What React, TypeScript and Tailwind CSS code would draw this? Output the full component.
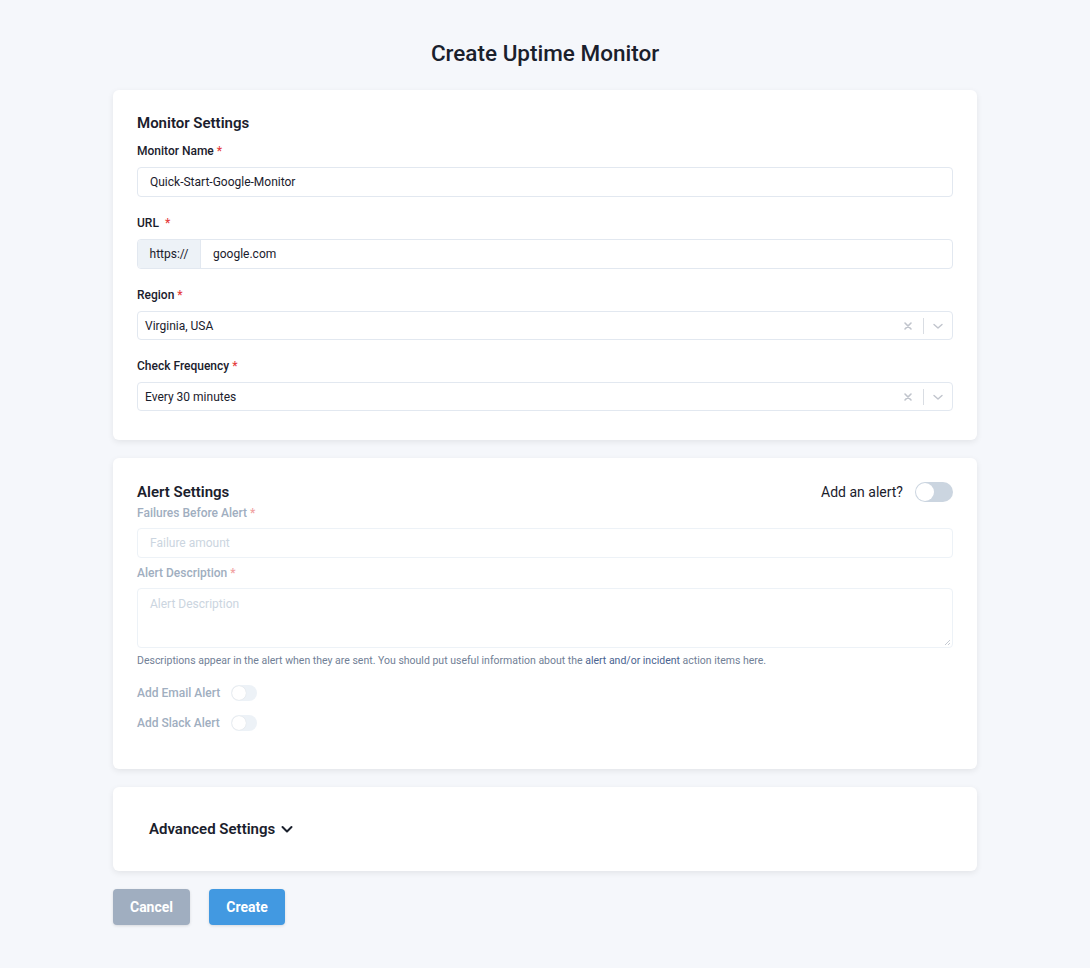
import React from "react";

function Label({ children, disabled }: { children: React.ReactNode; disabled?: boolean }) {
  return (
    <div className={`text-[12px] leading-[18px] font-medium ${disabled ? "text-[#a0aec0]" : "text-[#1a202c]"}`}>
      {children}
      <span className={disabled ? "text-[#f1a3a3] ml-[3px]" : "text-[#e53e3e] ml-[3px]"}>*</span>
    </div>
  );
}

function SelectBox({ value }: { value: string }) {
  return (
    <div className="mt-[7px] h-[29px] border border-[#e2e8f0] rounded-[4px] bg-white flex items-center">
      <div className="flex-1 pl-[7px] text-[12px] text-[#1a202c]">{value}</div>
      <div className="flex items-center h-full pr-[7px]">
        <svg width="14" height="14" viewBox="0 0 14 14" className="mx-[1px]">
          <path d="M4 4L10 10M10 4L4 10" stroke="#c0c4cc" strokeWidth="1.6" strokeLinecap="round" />
        </svg>
        <div className="w-px h-[16px] bg-[#d9dde3] mx-[7px]" />
        <svg width="14" height="14" viewBox="0 0 14 14">
          <path d="M3 5.5L7 9L11 5.5" stroke="#c0c4cc" strokeWidth="1.4" fill="none" strokeLinecap="round" strokeLinejoin="round" />
        </svg>
      </div>
    </div>
  );
}

function SmallToggle() {
  return (
    <div className="w-[26px] h-[16px] rounded-full bg-[#edf2f7] relative">
      <div className="absolute left-[1px] top-[1px] w-[14px] h-[14px] rounded-full bg-white shadow-[0_0_1px_rgba(0,0,0,0.15)]" />
    </div>
  );
}

export default function App() {
  return (
    <div
      className="min-h-screen bg-[#f5f7fb] pb-[43px]"
      style={{ fontFamily: "Roboto, 'Liberation Sans', sans-serif" }}
    >
      <h1 className="pt-[38px] text-center text-[22.5px] leading-[30px] font-medium text-[#1a202c]">
        Create Uptime Monitor
      </h1>

      <div className="w-[864px] mx-auto mt-[22px]">
        {/* Monitor Settings */}
        <div className="bg-white rounded-[6px] shadow-[0_2px_6px_rgba(0,0,0,0.08)] px-[24px] pt-[23px] pb-[29px]">
          <div className="text-[15px] leading-[20px] font-semibold text-[#1a202c]">Monitor Settings</div>

          <div className="mt-[9px]">
            <Label>Monitor Name</Label>
            <div className="mt-[7px] h-[30px] border border-[#e2e8f0] rounded-[4px] flex items-center px-[12px] text-[12px] text-[#1a202c]">
              Quick-Start-Google-Monitor
            </div>
          </div>

          <div className="mt-[17px]">
            <div className="text-[12px] leading-[18px] font-medium text-[#1a202c]">
              URL <span className="text-[#e53e3e] ml-[3px]">*</span>
            </div>
            <div className="mt-[7px] h-[30px] border border-[#e2e8f0] rounded-[4px] flex items-stretch overflow-hidden">
              <div className="w-[63px] bg-[#edf2f7] flex items-center justify-center text-[12px] text-[#1a202c] border-r border-[#e2e8f0]">
                https://
              </div>
              <div className="flex-1 flex items-center pl-[12px] text-[12px] text-[#1a202c]">google.com</div>
            </div>
          </div>

          <div className="mt-[17px]">
            <Label>Region</Label>
            <SelectBox value="Virginia, USA" />
          </div>

          <div className="mt-[17px]">
            <Label>Check Frequency</Label>
            <SelectBox value="Every 30 minutes" />
          </div>
        </div>

        {/* Alert Settings */}
        <div className="mt-[18px] bg-white rounded-[6px] shadow-[0_2px_6px_rgba(0,0,0,0.08)] px-[24px] pt-[24px] pb-[36px]">
          <div className="flex items-center justify-between h-[20px]">
            <div className="text-[15px] leading-[20px] font-semibold text-[#1a202c]">Alert Settings</div>
            <div className="flex items-center">
              <span className="text-[14px] text-[#1a202c] mr-[12px]">Add an alert?</span>
              <div className="w-[38px] h-[20px] rounded-full bg-[#cbd5e0] relative">
                <div className="absolute left-[1px] top-[1px] w-[18px] h-[18px] rounded-full bg-white" />
              </div>
            </div>
          </div>

          <div className="mt-[2px]">
            <Label disabled>Failures Before Alert</Label>
            <div className="mt-[6px] h-[30px] border border-[#edf2f7] rounded-[4px] flex items-center px-[12px] text-[12px] text-[#cbd5e0]">
              Failure amount
            </div>
          </div>

          <div className="mt-[6px]">
            <Label disabled>Alert Description</Label>
            <div className="mt-[6px] h-[60px] border border-[#edf2f7] rounded-[4px] px-[12px] pt-[6px] text-[12px] text-[#cbd5e0] relative">
              Alert Description
              <svg width="8" height="8" viewBox="0 0 8 8" className="absolute right-[1px] bottom-[1px]">
                <path d="M7 2L2 7M7 5L5 7" stroke="#b8bec8" strokeWidth="0.8" />
              </svg>
            </div>
          </div>

          <div className="mt-[5px] text-[10.5px] leading-[15px] text-[#718096]">
            Descriptions appear in the alert when they are sent. You should put useful information about the{" "}
            <span className="text-[#4a6390]">alert and/or incident</span> action items here.
          </div>

          <div className="mt-[15px] flex items-center h-[20px]">
            <span className="text-[12px] text-[#a0aec0] font-medium mr-[11px]">Add Email Alert</span>
            <SmallToggle />
          </div>
          <div className="mt-[10px] flex items-center h-[20px]">
            <span className="text-[12px] text-[#a0aec0] font-medium mr-[11px]">Add Slack Alert</span>
            <SmallToggle />
          </div>
        </div>

        {/* Advanced Settings */}
        <div className="mt-[18px] bg-white rounded-[6px] shadow-[0_2px_6px_rgba(0,0,0,0.08)] h-[84px] flex items-center pl-[36px]">
          <span className="text-[15px] font-semibold text-[#1a202c]">Advanced Settings</span>
          <svg width="14" height="14" viewBox="0 0 14 14" className="ml-[5px]">
            <path d="M2.5 5L7 9.5L11.5 5" stroke="#1a202c" strokeWidth="2" fill="none" strokeLinecap="round" strokeLinejoin="round" />
          </svg>
        </div>

        <div className="mt-[18px] flex gap-[19px]">
          <button className="w-[77px] h-[36px] rounded-[4px] bg-[#a0aec0] text-white text-[14px] font-bold shadow-[0_1px_3px_rgba(0,0,0,0.12)]">
            Cancel
          </button>
          <button className="w-[76px] h-[36px] rounded-[4px] bg-[#4299e1] text-white text-[14px] font-bold shadow-[0_1px_3px_rgba(0,0,0,0.12)]">
            Create
          </button>
        </div>
      </div>
    </div>
  );
}
